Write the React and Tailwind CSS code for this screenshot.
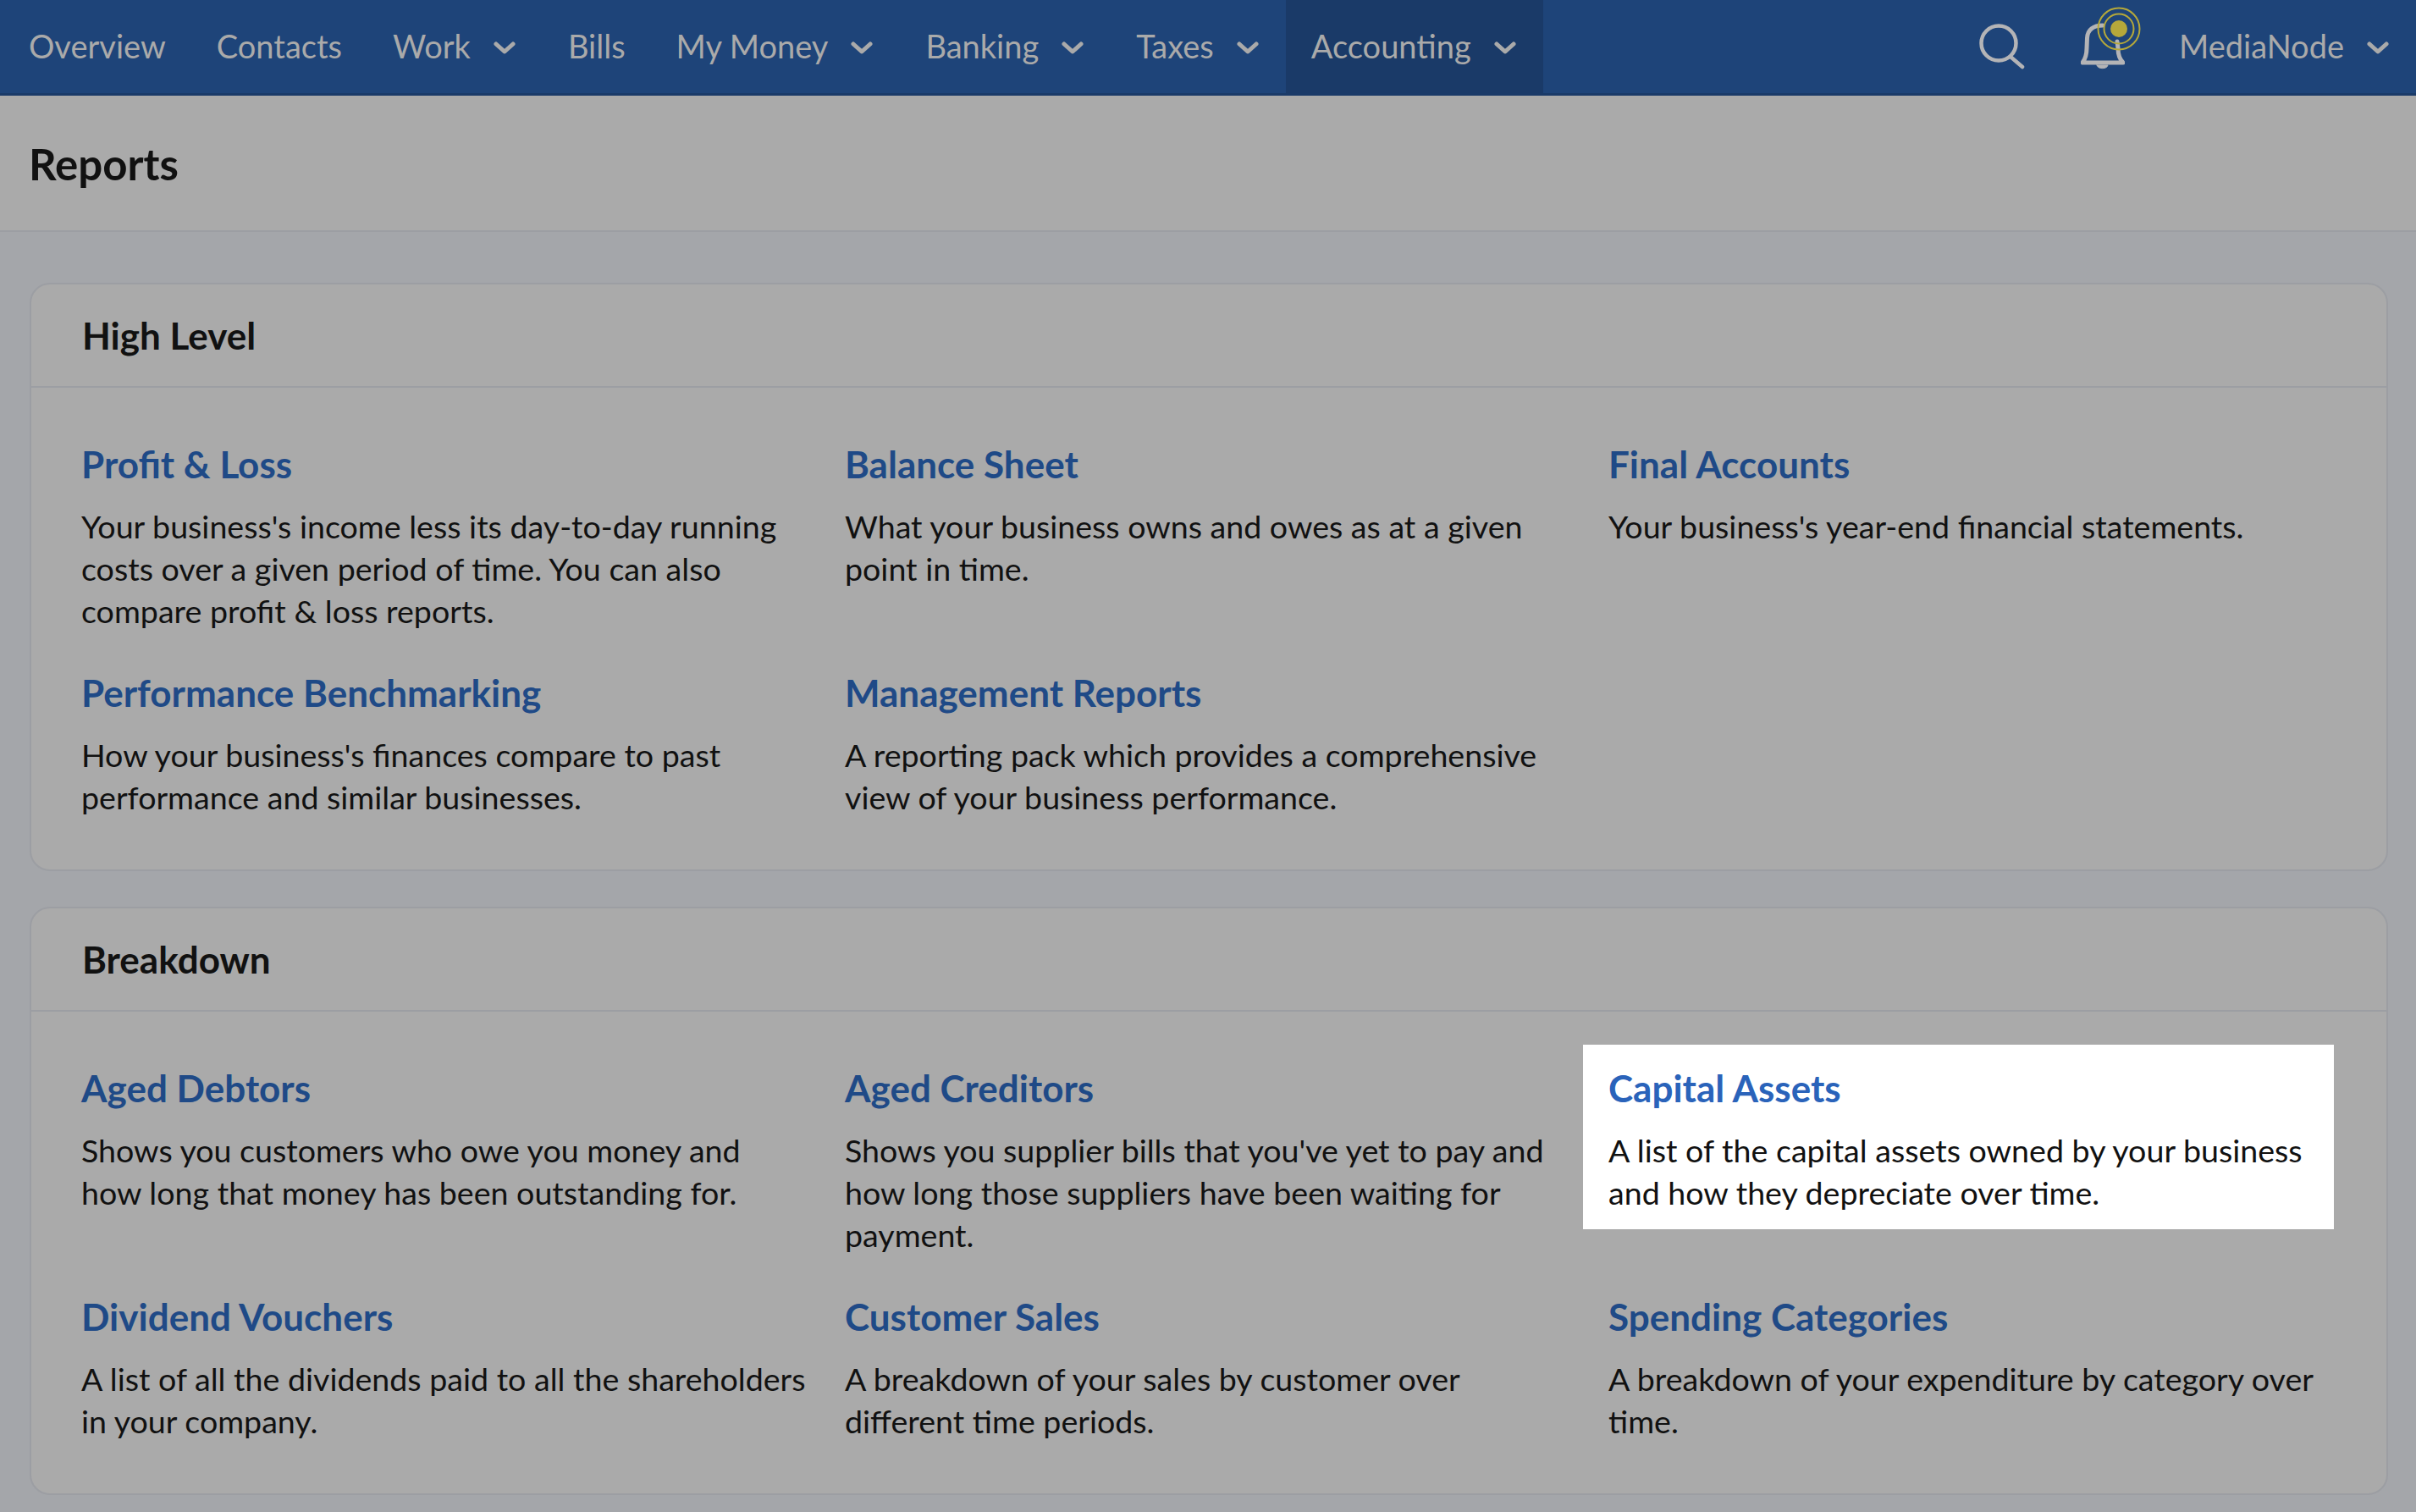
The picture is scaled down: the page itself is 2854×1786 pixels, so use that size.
const font = "font-['Lato','Liberation_Sans',sans-serif]";

function Chevron({ className = "" }) {
  return (
    <svg viewBox="0 0 26 15" className={`w-[26px] h-[15px] ${className}`} fill="none" stroke="#aaaaaa" strokeWidth="5" strokeLinecap="round" strokeLinejoin="round">
      <path d="M3 3 L13 12 L23 3" />
    </svg>
  );
}

function NavItem({ label, caret, active }) {
  return (
    <div className={`flex items-center h-full pl-[30px] ${caret ? "pr-[32px]" : "pr-[30px]"} ${active ? "bg-[#1a3a68]" : ""}`}>
      <span className="text-[38px] leading-none -mt-[2px]">{label}</span>
      {caret && <Chevron className="ml-[27px] mt-[2px]" />}
    </div>
  );
}

function Report({ title, desc, highlight }) {
  return (
    <div className={`mr-[15px] pt-[29px] pb-[18px] pl-[30px] ${highlight ? "bg-white self-start" : ""}`}>
      <h3 className={`text-[44px] leading-[44px] font-bold mb-[27px] ${highlight ? "text-[#2a63ba]" : "text-[#1f4a87]"}`}>{title}</h3>
      <p className="text-[37.6px] leading-[50px] text-[#111111]">{desc}</p>
    </div>
  );
}

function Card({ title, items, className = "" }) {
  return (
    <section className={`ml-[35px] mr-[33px] rounded-[24px] border-2 border-[#9c9ea3] bg-[#aaaaaa] ${className}`}>
      <div className="h-[122px] flex items-center px-[60px] border-b-2 border-[#9c9ea3]">
        <h2 className="text-[44px] font-bold text-[#111111]">{title}</h2>
      </div>
      <div className="grid grid-cols-3 gap-y-[2px] w-[2706px] ml-[29px] pt-[39px] pb-[42px]">
        {items.map((it) => (
          <Report key={it.title} {...it} />
        ))}
      </div>
    </section>
  );
}

const high = [
  { title: "Profit & Loss", desc: "Your business's income less its day-to-day running costs over a given period of time. You can also compare profit & loss reports." },
  { title: "Balance Sheet", desc: "What your business owns and owes as at a given point in time." },
  { title: "Final Accounts", desc: "Your business's year-end financial statements." },
  { title: "Performance Benchmarking", desc: "How your business's finances compare to past performance and similar businesses." },
  { title: "Management Reports", desc: "A reporting pack which provides a comprehensive view of your business performance." },
];

const breakdown = [
  { title: "Aged Debtors", desc: "Shows you customers who owe you money and how long that money has been outstanding for." },
  { title: "Aged Creditors", desc: "Shows you supplier bills that you've yet to pay and how long those suppliers have been waiting for payment." },
  { title: "Capital Assets", desc: "A list of the capital assets owned by your business and how they depreciate over time.", highlight: true },
  { title: "Dividend Vouchers", desc: "A list of all the dividends paid to all the shareholders in your company." },
  { title: "Customer Sales", desc: "A breakdown of your sales by customer over different time periods." },
  { title: "Spending Categories", desc: "A breakdown of your expenditure by category over time." },
];

export default function App() {
  return (
    <div className={`${font} w-[2854px] h-[1786px] overflow-hidden bg-[#a4a6aa]`}>
      <header className="h-[113px] bg-[#1e4479] border-b-[3px] border-[#1a3a68] flex items-center text-[#aaaaaa] pl-[4px]">
        <NavItem label="Overview" />
        <NavItem label="Contacts" />
        <NavItem label="Work" caret />
        <NavItem label="Bills" />
        <NavItem label="My Money" caret />
        <NavItem label="Banking" caret />
        <NavItem label="Taxes" caret />
        <NavItem label="Accounting" caret active />
        <div className="ml-auto flex items-center h-full pr-[32px]">
          <svg viewBox="0 0 54 54" className="w-[54px] h-[54px]" fill="none" stroke="#b4b4b6" strokeWidth="4.5" strokeLinecap="round">
            <circle cx="23" cy="23" r="20.5" />
            <path d="M37 39 L51 51" />
          </svg>
          <div className="relative ml-[66px] w-[52px] h-[56px]">
            <svg viewBox="0 0 52 56" className="w-[52px] h-[56px]" fill="none" stroke="#b4b4b6" strokeWidth="5" strokeLinecap="round" strokeLinejoin="round">
              <path d="M26 3 C15 3 8 8 7.5 18 L7 30 C7 38 5 43 2 47 L50 47 C46 43 44 38 44 30 L43 22" />
              <path d="M19 50 L32 50 C31 55 20 55 19 50 Z" fill="#b4b4b6" strokeWidth="1" />
            </svg>
            <svg viewBox="0 0 52 52" className="absolute left-[19px] top-[-19px] w-[52px] h-[52px]" fill="none" stroke="#b5a83a" strokeWidth="2">
              <circle cx="26" cy="26" r="24.5" />
              <circle cx="26" cy="26" r="17.5" />
              <circle cx="26" cy="26" r="10" fill="#b5a83a" stroke="none" />
            </svg>
          </div>
          <span className="ml-[64px] text-[38px] leading-none -mt-[2px]">MediaNode</span>
          <Chevron className="ml-[27px] mt-[2px]" />
        </div>
      </header>
      <div className="h-[161px] bg-[#aaaaaa] border-b-2 border-[#9c9ea3] flex items-center px-[34px] pt-[4px]">
        <h1 className="text-[51px] font-bold text-[#111111]">Reports</h1>
      </div>
      <Card title="High Level" items={high} className="mt-[60px]" />
      <Card title="Breakdown" items={breakdown} className="mt-[42px]" />
    </div>
  );
}
